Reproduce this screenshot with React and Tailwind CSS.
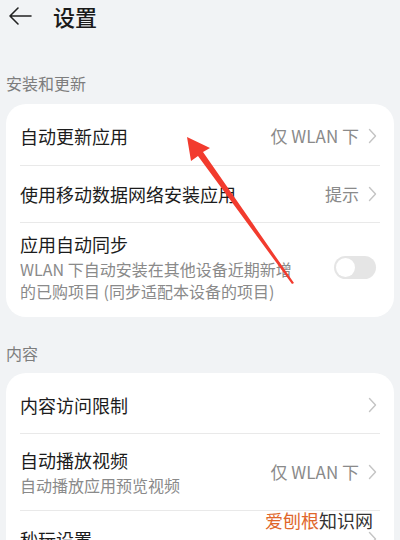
import React from 'react';

const font = { fontFamily: '"Noto Sans CJK SC", "Noto Sans", sans-serif' };

const Chevron = () => (
  <svg width="9" height="16" viewBox="0 0 9 16" className="shrink-0">
    <path d="M1.5 1.5 L7.5 8 L1.5 14.5" fill="none" stroke="#c4c4c4" strokeWidth="1.4" strokeLinecap="round" strokeLinejoin="round" />
  </svg>
);

const Divider = () => <div className="h-px bg-[#e9e9e9] mx-[14px]" />;

const Row = ({ title, sub, value, chevron = true, children, className = '' }) => (
  <div className={`flex items-center pl-[14px] pr-[17px] ${className}`}>
    <div className="flex-1 min-w-0">
      <div className="text-[18px] leading-[24px] text-[#1c1c1c]">{title}</div>
      {sub && <div className="text-[16px] leading-[22px] text-[#8a8a8a] mt-[2px] max-w-[280px]">{sub}</div>}
    </div>
    {value && <span className="text-[17px] text-[#8a8a8a] mr-[9px] whitespace-nowrap">{value}</span>}
    {children}
    {chevron && <Chevron />}
  </div>
);

export default function App() {
  return (
    <div className="w-[400px] h-[540px] bg-[#f1f3f5] overflow-hidden relative" style={font}>
      <div className="flex items-center h-[32px] pl-[8px]">
        <svg width="24" height="20" viewBox="0 0 24 20">
          <path d="M10 2 L2 10 L10 18 M2 10 L23 10" fill="none" stroke="#222" strokeWidth="1.6" strokeLinecap="round" strokeLinejoin="round" />
        </svg>
        <span className="ml-[21px] text-[22px] font-medium text-[#1a1a1a]">设置</span>
      </div>

      <div className="px-[6px] mt-[40px] text-[16px] text-[#7d7d7d] leading-[22px]">安装和更新</div>

      <div className="mx-[6px] mt-[10px] bg-white rounded-[20px] pb-[15px]">
        <Row title="自动更新应用" value="仅 WLAN 下" className="h-[61px] pt-[2px]" />
        <Divider />
        <Row title="使用移动数据网络安装应用" value="提示" className="h-[56px]" />
        <Divider />
        <Row
          title="应用自动同步"
          sub="WLAN 下自动安装在其他设备近期新增的已购项目 (同步适配本设备的项目)"
          chevron={false}
          className="pt-[9px]"
        >
          <div className="w-[42px] h-[23px] rounded-full bg-[#e5e5e5] flex items-center pl-[2px] mr-[1px]">
            <div className="w-[19px] h-[19px] rounded-full bg-white" />
          </div>
        </Row>
      </div>

      <div className="px-[6px] mt-[25px] text-[16px] text-[#7d7d7d] leading-[22px]">内容</div>

      <div className="mx-[6px] mt-[9px] bg-white rounded-[20px]">
        <Row title="内容访问限制" className="h-[60px] pt-[4px]" />
        <Divider />
        <Row title="自动播放视频" sub="自动播放应用预览视频" value="仅 WLAN 下" className="h-[76px]" />
        <Divider />
        <Row title="秒玩设置" className="h-[56px]" />
      </div>

      <div className="absolute left-[265px] top-[508px] text-[18px] leading-[24px]">
        <span className="text-[#e0672b]">爱刨根</span>
        <span className="text-[#333]">知识网</span>
      </div>

      <svg className="absolute left-0 top-0 pointer-events-none" width="400" height="540">
        <polygon points="187,137 210,148 203,152 294,283 292,284 198,156 191,161" fill="#f23b2e" />
      </svg>
    </div>
  );
}
